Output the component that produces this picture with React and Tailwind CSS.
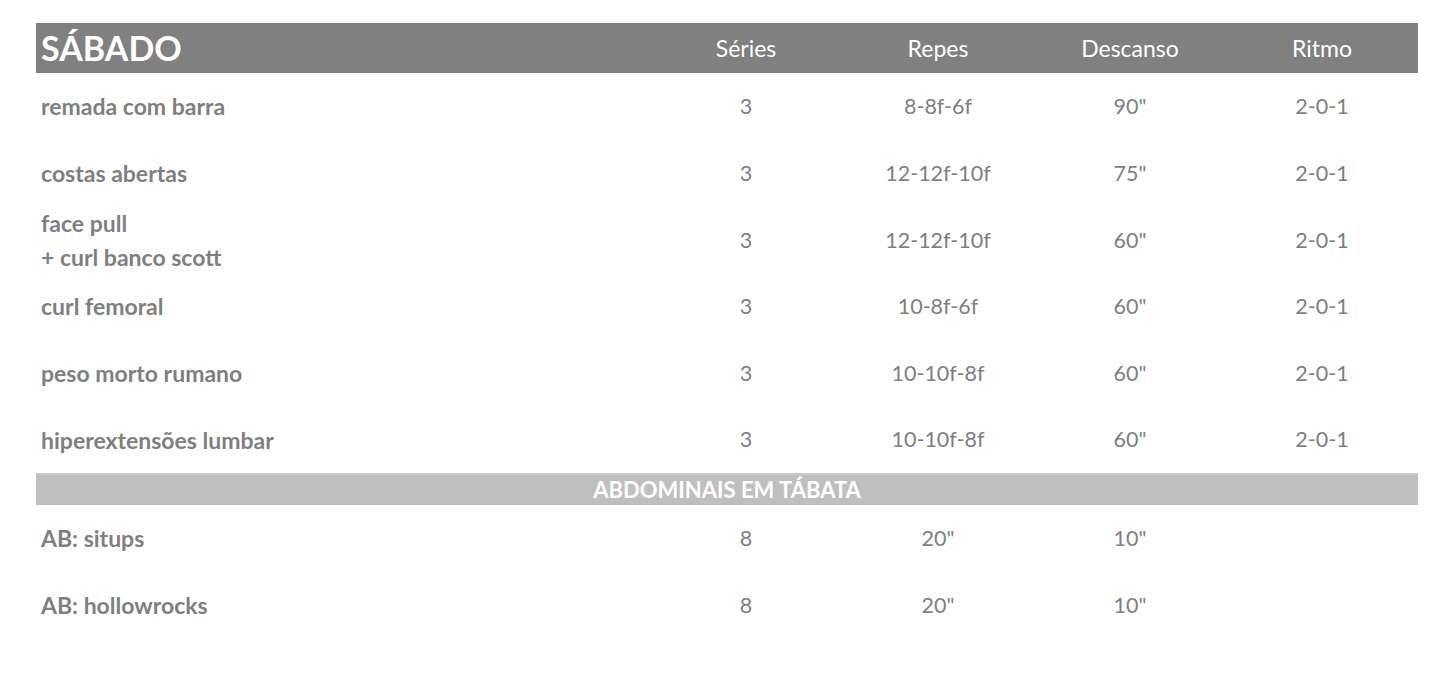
import React from 'react';

const rows = [
  { name: ['remada com barra'], series: '3', repes: '8-8f-6f', descanso: '90"', ritmo: '2-0-1' },
  { name: ['costas abertas'], series: '3', repes: '12-12f-10f', descanso: '75"', ritmo: '2-0-1' },
  { name: ['face pull', '+ curl banco scott'], series: '3', repes: '12-12f-10f', descanso: '60"', ritmo: '2-0-1' },
  { name: ['curl femoral'], series: '3', repes: '10-8f-6f', descanso: '60"', ritmo: '2-0-1' },
  { name: ['peso morto rumano'], series: '3', repes: '10-10f-8f', descanso: '60"', ritmo: '2-0-1' },
  { name: ['hiperextensões lumbar'], series: '3', repes: '10-10f-8f', descanso: '60"', ritmo: '2-0-1' },
];

const abs = [
  { name: ['AB: situps'], series: '8', repes: '20"', descanso: '10"', ritmo: '' },
  { name: ['AB: hollowrocks'], series: '8', repes: '20"', descanso: '10"', ritmo: '' },
];

const Row = ({ row }) => (
  <div className="grid grid-cols-[614px_repeat(4,1fr)] h-[66.67px] items-center text-[#7f7f7f] text-[21.5px]">
    <div className="pl-[5px] font-bold text-[23px] leading-[34px]">
      {row.name.map((n) => (
        <div key={n}>{n}</div>
      ))}
    </div>
    <div className="text-center">{row.series}</div>
    <div className="text-center">{row.repes}</div>
    <div className="text-center">{row.descanso}</div>
    <div className="text-center">{row.ritmo}</div>
  </div>
);

const App = () => {
  return (
    <div className="min-h-screen bg-white pl-[36px] pt-[23px] font-['Lato',sans-serif]">
      <div className="w-[1382px]">
        {/* Header */}
        <div className="grid grid-cols-[614px_repeat(4,1fr)] h-[50px] items-center bg-[#808080] text-white">
          <div className="pl-[5px] text-[34px] font-bold leading-none">SÁBADO</div>
          <div className="text-center text-[23px]">Séries</div>
          <div className="text-center text-[23px]">Repes</div>
          <div className="text-center text-[23px]">Descanso</div>
          <div className="text-center text-[23px]">Ritmo</div>
        </div>

        {rows.map((row) => (
          <Row key={row.name[0]} row={row} />
        ))}

        {/* Tabata */}
        <div className="h-[32px] bg-[#bfbfbf] border-t-2 border-[#c9c9c9] flex items-center justify-center text-white font-bold text-[22px]">
          ABDOMINAIS EM TÁBATA
        </div>

        {abs.map((row) => (
          <Row key={row.name[0]} row={row} />
        ))}
      </div>
    </div>
  );
};

export default App;
